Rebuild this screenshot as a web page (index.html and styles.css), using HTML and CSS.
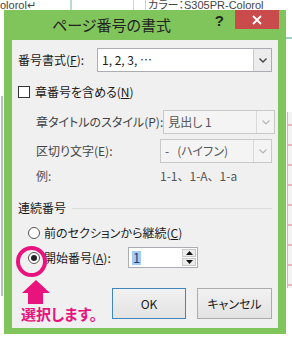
FILE: index.html
```html
<!DOCTYPE html>
<html lang="ja">
<head>
  <meta charset="UTF-8" />
  <meta name="viewport" content="width=device-width, initial-scale=1.0" />
  <title>ページ番号の書式</title>
  <link rel="stylesheet" href="styles.css">
</head>
<body>
  <div class="desk">
    <!-- 背景の文書 -->
    <span class="bg-text bg-left">olorol↵</span>
    <span class="bg-text bg-right">カラー：S305PR-Colorol</span>
    <span class="vline v1"></span>
    <span class="vline v2"></span>
    <span class="vline v3"></span>
    <span class="hline"></span>
    <span class="side-left"></span>
    <span class="side-right"></span>

    <!-- ダイアログ -->
    <section class="dialog">
      <header class="titlebar">
        <h1 class="title">ページ番号の書式</h1>
        <span class="help">?</span>
        <button class="close" aria-label="閉じる">
          <svg width="10" height="10" viewBox="0 0 10 10"><path d="M1 1 L9 9 M9 1 L1 9" stroke="#fff" stroke-width="1.8"/></svg>
        </button>
      </header>

      <div class="panel">
        <div class="row r-format">
          <span class="lbl w-format">番号書式(<u>F</u>):</span>
          <div class="select">
            <span class="val">1, 2, 3, …</span>
            <span class="arrow"><svg width="8" height="5" viewBox="0 0 8 5"><path d="M0.5 0.5 L4 4 L7.5 0.5" fill="none" stroke="#444" stroke-width="1.4"/></svg></span>
          </div>
        </div>

        <div class="row r-check">
          <span class="checkbox"></span>
          <span class="lbl">章番号を含める(<u>N</u>)</span>
        </div>

        <div class="row r-sub">
          <span class="lbl w-sub">章タイトルのスタイル(P):</span>
          <div class="select disabled">
            <span class="val">見出し 1</span>
            <span class="arrow"><svg width="8" height="5" viewBox="0 0 8 5"><path d="M0.5 0.5 L4 4 L7.5 0.5" fill="none" stroke="#b5b5b5" stroke-width="1.2"/></svg></span>
          </div>
        </div>

        <div class="row r-sub r-sub2">
          <span class="lbl w-sub">区切り文字(E):</span>
          <div class="select disabled">
            <span class="val">-&nbsp;&nbsp;&nbsp;(ハイフン)</span>
            <span class="arrow"><svg width="8" height="5" viewBox="0 0 8 5"><path d="M0.5 0.5 L4 4 L7.5 0.5" fill="none" stroke="#b5b5b5" stroke-width="1.2"/></svg></span>
          </div>
        </div>

        <div class="row r-ex">
          <span class="lbl w-sub">例:</span>
          <span class="lbl full">1-1、1-A、1-a</span>
        </div>

        <div class="row r-group">
          <span class="lbl">連続番号</span>
          <span class="rule"></span>
        </div>

        <div class="row r-radio">
          <span class="radio"></span>
          <span class="lbl">前のセクションから継続(<u>C</u>)</span>
        </div>

        <div class="row r-radio r-radio2">
          <span class="radio checked"></span>
          <span class="lbl w-start">開始番号(<u>A</u>):</span>
          <div class="spin">
            <span class="spin-val"><span class="sel">1</span></span>
            <span class="spin-btns">
              <span class="sb"><svg width="7" height="4" viewBox="0 0 7 4"><path d="M0 4 L3.5 0 L7 4Z" fill="#111"/></svg></span>
              <span class="sb"><svg width="7" height="4" viewBox="0 0 7 4"><path d="M0 0 L3.5 4 L7 0Z" fill="#111"/></svg></span>
            </span>
          </div>
        </div>

        <div class="row r-buttons">
          <button class="btn default">OK</button>
          <button class="btn">キャンセル</button>
        </div>
      </div>
    </section>

    <!-- 注釈 -->
    <span class="note-ring"></span>
    <svg class="note-arrow" width="28" height="24" viewBox="0 0 28 24"><polygon points="14,0 28,13 21,13 21,24 6,24 6,13 0,13" fill="#e8137d"/></svg>
    <span class="note-text">選択します。</span>
  </div>
</body>
</html>
```

FILE: styles.css
```css
/* ─── 0. リセット ───────────────────────────── */
*,*::before,*::after{box-sizing:border-box;margin:0;padding:0}
html,body{width:292px;height:340px;overflow:hidden;background:#fff}
body{
  font-family:"Noto Sans CJK JP","Liberation Sans",sans-serif;
  font-feature-settings:"palt";
  font-size:12px;color:#1a1a1a;
}
u{text-decoration:underline;text-underline-offset:1px}

/* ─── 1. 背景の文書 ─────────────────────────── */
.desk{position:relative;width:292px;height:340px;overflow:hidden}
.bg-text{position:absolute;top:0;font-family:"Liberation Sans","Noto Sans CJK JP",sans-serif;font-size:11px;color:#444;white-space:nowrap;line-height:10px}
.bg-left{left:0}
.bg-right{left:148px}
.vline{position:absolute;top:0;height:12px;width:1px}
.v1{left:70px;width:2px;background:#b7dccb}
.v2{left:133px;background:#c8d3de}
.v3{left:145px;background:#cfcfcf}
.hline{position:absolute;left:280px;top:37px;width:12px;height:2px;background:#9fd0c6}
.side-left{position:absolute;left:1px;top:96px;width:2px;height:200px;background:#b8bfc8}
.side-right{
  position:absolute;left:287px;top:112px;width:6px;height:176px;
  background:repeating-linear-gradient(#f3f3f3 0 12px,#e9b6bd 12px 14px,#f3f3f3 14px 20px);
  border-left:1px solid #bdbdbd;
}

/* ─── 2. ダイアログ ─────────────────────────── */
.dialog{
  position:absolute;left:4px;top:10px;width:282px;height:324px;
  background:#80c45c;padding:0 8px 6px 8px;
  display:flex;flex-direction:column;
}
.titlebar{height:30px;display:flex;align-items:flex-start;margin-right:-1px}
.title{
  flex:1;font-size:15px;font-weight:400;color:#222;
  margin-left:40px;line-height:30px;
}
.help{font-family:"Liberation Sans",sans-serif;font-weight:700;font-size:15px;color:#1f2a1a;margin-top:3px;margin-right:11px;line-height:16px}
.close{
  width:44px;height:19px;border:none;background:#c94b4c;
  display:flex;align-items:center;justify-content:center;
}

.panel{flex:1;background:#f0f0f0;padding:0 6px;display:flex;flex-direction:column}
.row{display:flex;align-items:center;flex-shrink:0}
.lbl{white-space:nowrap;line-height:16px}
.full{font-feature-settings:normal}

/* 番号書式 */
.r-format{height:24px;margin-top:8px}
.w-format{width:79px}
.select{
  flex:1;height:24px;display:flex;background:#fff;
  border:1px solid #abadb3;
}
.select .val{flex:1;padding-left:4px;line-height:22px;white-space:nowrap}
.select .arrow{
  width:18px;display:flex;align-items:center;justify-content:center;
  background:#ececec;border-left:1px solid #c9c9c9;
}
.select.disabled{flex:0 0 112px;background:#f4f4f4;border-color:#c8c8c8;color:#555}
.select.disabled .arrow{background:#f4f4f4;border-left-color:#dadada}

/* 章番号 */
.r-check{height:16px;margin-top:12px}
.checkbox{width:12px;height:12px;border:1px solid #333;background:#fff;margin-right:5px}
.r-sub{height:24px;margin-top:10px;padding-left:18px;color:#444}
.r-sub2{margin-top:5px}
.w-sub{flex:1}
.r-ex{height:16px;margin-top:5px;padding-left:18px;color:#555}
.r-ex .full{width:112px}

/* 連続番号 */
.r-group{height:16px;margin-top:16px}
.rule{flex:1;height:1px;background:#dadada;margin-left:6px}
.r-radio{height:16px;margin-top:9px;padding-left:10px}
.radio{
  width:12px;height:12px;border-radius:50%;border:1px solid #555;background:#fff;
  margin-right:4px;display:flex;align-items:center;justify-content:center;
}
.radio.checked::after{content:"";width:6px;height:6px;border-radius:50%;background:#222}
.r-radio2{height:21px;margin-top:6px}
.w-start{width:84px}
.spin{width:70px;height:21px;border:1px solid #abadb3;background:#fff;display:flex}
.spin-val{flex:1;padding-left:3px;display:flex;align-items:center}
.sel{background:#a3ccf0;color:#1b3d7a;line-height:14px;padding:0 1px;font-size:13px}
.spin-btns{width:15px;display:flex;flex-direction:column;gap:1px;padding:1px 1px 1px 0}
.sb{flex:1;display:flex;align-items:center;justify-content:center;background:#ececec;border:1px solid #c9c9c9}

/* ボタン */
.r-buttons{height:31px;margin-top:20px;justify-content:flex-end;gap:11px}
.btn{
  width:75px;height:31px;font:inherit;color:#1a1a1a;
  background:linear-gradient(#f1f1f1,#e3e3e3);border:1px solid #acacac;
}
.btn.default{width:74px;border-color:#3f86bf}

/* ─── 3. 注釈 ─────────────────────────────── */
.note-ring{
  position:absolute;left:16px;top:246px;width:31px;height:31px;
  border:4px solid #e8137d;border-radius:50%;
}
.note-arrow{position:absolute;left:22px;top:280px}
.note-text{
  position:absolute;left:21px;top:306px;
  font-size:15px;font-weight:700;color:#e8137d;line-height:16px;white-space:nowrap;
}
```
